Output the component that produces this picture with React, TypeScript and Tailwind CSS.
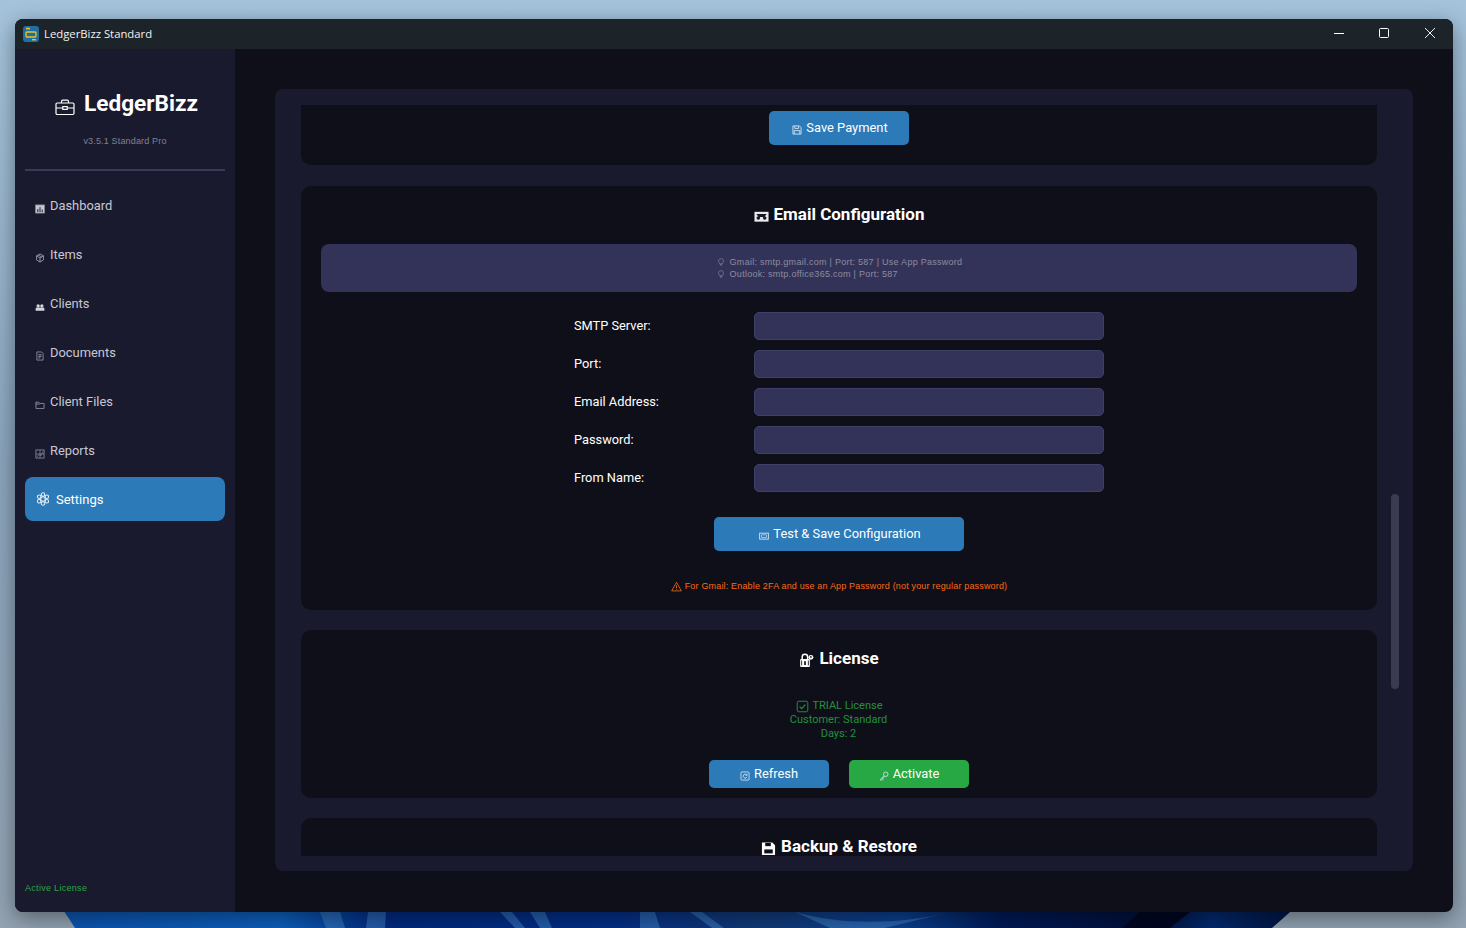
import React from "react";

const Ic = ({ className = "", children, vb = "0 0 16 16" }: { className?: string; children: React.ReactNode; vb?: string }) => (
  <svg viewBox={vb} className={className} fill="none" stroke="currentColor" strokeWidth={1.2}>
    {children}
  </svg>
);

const Icons: Record<string, React.ReactNode> = {
  dashboard: (<><rect x="1" y="1.5" width="14" height="13" fill="#c5c5cf" stroke="#8e8e9c" /><path d="M4.5 13V8M8 13V5M11.5 13V9" stroke="#1a1a2e" strokeWidth="1.6" /></>),
  items: (<><path d="M8 1.5l5.5 3v6.5L8 14.5 2.5 11V4.5z" /><path d="M2.5 4.5L8 8l5.5-3.5M8 8v6.5M5 3l5.5 3.3" /></>),
  clients: (<><circle cx="5" cy="6" r="2.6" fill="currentColor" stroke="none" /><circle cx="11" cy="6" r="2.6" fill="currentColor" stroke="none" /><path d="M1 14v-3.2q0-2 2-2h10q2 0 2 2V14z" fill="currentColor" stroke="none" /></>),
  doc: (<><path d="M3 1.5h7.5L13 4v10.5H3z" /><path d="M5.5 6h5M5.5 8.5h5M5.5 11h3" strokeWidth="1.4" /></>),
  folder: (<path d="M1.5 13.5v-10h4.5l1.5 2h7v8z M1.5 6.5h6" />),
  report: (<><rect x="1.5" y="1.5" width="13" height="13" /><path d="M1.5 8h13M8 1.5v13M3 12.5L7 9l2.5 1.5L13 4" strokeWidth="1" /></>),
  gear: (<><circle cx="8" cy="8" r="2.6" /><circle cx="8" cy="2.9" r="2" /><circle cx="8" cy="13.1" r="2" /><circle cx="3.6" cy="5.4" r="2" /><circle cx="12.4" cy="5.4" r="2" /><circle cx="3.6" cy="10.6" r="2" /><circle cx="12.4" cy="10.6" r="2" /></>),
  save: (<><path d="M1.5 1.5h10.5l2.5 2.5v10.5h-13z" strokeWidth="1.5" /><path d="M4.5 1.5v4h6v-4M3.5 14.5v-5.5h9v5.5" strokeWidth="1.5" /></>),
  saveSolid: (<><path d="M1 1.5h11l3 3V15H1z" fill="currentColor" stroke="none" /><path d="M4.5 2v3.5h6V2" fill="#0f0f1a" stroke="none" /><rect x="3.5" y="9" width="9" height="4.2" fill="#0f0f1a" stroke="none" /></>),
  mail: (<><rect x="0.5" y="3" width="15" height="10.5" fill="#e8e8ee" stroke="none" /><path d="M2.5 5.4H13.5L11 8.4H5z" fill="#16161f" stroke="none" /><circle cx="4.6" cy="9.6" r="1.9" fill="#16161f" stroke="none" /><circle cx="11.4" cy="9.6" r="1.9" fill="#16161f" stroke="none" /></>),
  mailOutline: (<><rect x="1" y="3.5" width="14" height="9.5" strokeWidth="1.5" /><rect x="4" y="6" width="8" height="4.5" rx="1" strokeWidth="1.2" /></>),
  bulb: (<><path d="M5 10.2C3.6 9 3 7.8 3 6.3a5 5 0 0 1 10 0c0 1.5-.6 2.7-2 3.9V11.5H5z" /><path d="M5.8 13.2h4.4M6.8 15h2.4" /></>),
  warn: (<><path d="M8 1.8L15 14.4H1z" /><path d="M8 6v4.6M8 11.8v1.2" /></>),
  check: (<><rect x="1.5" y="1.5" width="13" height="13" rx="2" /><path d="M4.5 8.2l2.5 2.5 4.5-5" strokeWidth="1.4" /></>),
  refresh: (<><rect x="1.5" y="1.5" width="13" height="13" rx="1.5" strokeWidth="1.4" /><path d="M11 6.5A3.2 3.2 0 1 0 11.2 9.5M11.2 4.5v2.4H8.8" strokeWidth="1.5" /></>),
  key: (<><circle cx="10.8" cy="5.2" r="3.6" strokeWidth="1.4" /><path d="M8 7.8L1.8 14l1.2 1 1.4-1.4 1.2 1 1.1-1.4-.8-1L9 9" strokeWidth="1.4" /></>),
  lock: (<><rect x="1.2" y="6.4" width="10.4" height="8.4" rx="1" fill="currentColor" stroke="none" /><path d="M3.4 6.5V4.2a2.9 2.9 0 0 1 5.8 0v2.3" strokeWidth="1.6" /><circle cx="12.7" cy="4.6" r="2.6" fill="currentColor" stroke="none" /><rect x="5.5" y="8.8" width="1.8" height="4" fill="#0f0f1a" stroke="none" /><path d="M2.8 8v5.2M10 8v5.2" stroke="#0f0f1a" strokeWidth=".9" /><circle cx="12.7" cy="4.2" r=".9" fill="#0f0f1a" stroke="none" /></>),
  case: (<><rect x="1" y="5" width="18" height="11.5" rx="1.2" /><path d="M6.5 5V3.4q0-1.2 1.2-1.2h4.6q1.2 0 1.2 1.2V5M1 10h6.5M12.5 10H19" /><rect x="7.8" y="8.6" width="4.4" height="2.8" /></>),
};

const navItems: [string, string, string][] = [
  ["Dashboard", "dashboard", "text-[#c5c5cf]"],
  ["Items", "items", "text-[#b4b4c0]"],
  ["Clients", "clients", "text-[#d5d5dd]"],
  ["Documents", "doc", "text-[#a4a4b2]"],
  ["Client Files", "folder", "text-[#a4a4b2]"],
  ["Reports", "report", "text-[#9a9aa8]"],
];

const fields = ["SMTP Server:", "Port:", "Email Address:", "Password:", "From Name:"];

const Card = ({ className = "", children }: { className?: string; children: React.ReactNode }) => (
  <section className={`shrink-0 bg-[#0f0f1a] rounded-[10px] ${className}`}>{children}</section>
);

const Heading = ({ icon, label, iconClass = "w-[15px] h-[15px]" }: { icon: string; label: string; iconClass?: string }) => (
  <h2 className="flex items-center justify-center gap-[5px] text-[17px] leading-5 font-bold text-white">
    <Ic className={`${iconClass} mt-[5px] shrink-0`}>{Icons[icon]}</Ic>
    <span>{label}</span>
  </h2>
);

const Button = ({ icon, label, className }: { icon: string; label: string; className: string }) => (
  <button className={`flex items-center justify-center gap-[4px] rounded-[5px] text-[12.9px] text-white ${className}`}>
    <Ic className="w-[10px] h-[10px] mt-[4px] shrink-0 text-[#cfe0ef]">{Icons[icon]}</Ic>
    <span className="-mt-[1px]">{label}</span>
  </button>
);

export default function App() {
  return (
    <div className="relative w-[1466px] h-[928px] overflow-hidden bg-[#94b2cc] font-['Roboto',sans-serif]">
      <svg className="absolute inset-0 w-full h-full" viewBox="0 0 1466 928" preserveAspectRatio="none">
        <defs>
          <linearGradient id="sky" x1="0" y1="0" x2="0" y2="1">
            <stop offset="0" stopColor="#a5c4dc" />
            <stop offset="0.5" stopColor="#8ba5bd" />
            <stop offset="1" stopColor="#93a3b3" />
          </linearGradient>
          <linearGradient id="bloom" x1="0" y1="0" x2="1" y2="0">
            <stop offset="0" stopColor="#0c55b0" />
            <stop offset="0.18" stopColor="#0d60bd" />
            <stop offset="0.26" stopColor="#012a80" />
            <stop offset="0.45" stopColor="#032f88" />
            <stop offset="0.56" stopColor="#123a78" />
            <stop offset="0.68" stopColor="#0a4090" />
            <stop offset="0.76" stopColor="#011a58" />
            <stop offset="0.88" stopColor="#00103a" />
            <stop offset="0.93" stopColor="#022a70" />
            <stop offset="1" stopColor="#02133f" />
          </linearGradient>
        </defs>
        <rect width="1466" height="928" fill="url(#sky)" />
        <path d="M60 905H1298L1272 928H75z" fill="url(#bloom)" />
        <path d="M320 912L326 928H345L340 912zM368 912L366 928H385L386 912zM500 912L515 928H525L512 912zM530 912L540 928H552L545 912zM640 912L640 928H660L655 912zM690 912L712 928H724L702 912zM795 912C840 925 900 925 950 912L885 928H830z" fill="#3a7cc4" opacity=".6" />
        <path d="M1140 912L1122 928H1170L1190 912z" fill="#010722" />
      </svg>

      <div className="absolute left-[15px] top-[19px] w-[1438px] h-[893px] flex flex-col rounded-[8px] overflow-hidden shadow-[0_6px_22px_rgba(0,0,0,0.42)] bg-[#0f0f1a]">
        <header className="h-[30px] shrink-0 flex items-center bg-[#1c2329] pl-[8px] font-['Open_Sans',sans-serif] text-[11.3px] text-[#f2f2f2]">
          <svg viewBox="0 0 16 16" className="w-4 h-4 shrink-0">
            <rect width="16" height="16" rx="3" fill="#1f6fa3" />
            <rect x="3" y="6" width="10" height="5" rx="1" fill="none" stroke="#f0c020" strokeWidth="1.3" />
            <rect x="3" y="1.8" width="4" height="1.6" fill="#f0c020" />
            <rect x="9" y="13" width="4" height="1.4" fill="#f0c020" />
          </svg>
          <span className="ml-[5px]">LedgerBizz Standard</span>
          <div className="ml-auto flex items-center text-white">
            <svg viewBox="0 0 46 30" className="w-[46px] h-[30px]"><path d="M19 14.5h10" stroke="#fff" strokeWidth="1" /></svg>
            <svg viewBox="0 0 46 30" className="w-[46px] h-[30px]"><rect x="18.5" y="9.5" width="9" height="9" rx="1" fill="none" stroke="#fff" strokeWidth="1" /></svg>
            <svg viewBox="0 0 46 30" className="w-[46px] h-[30px]"><path d="M18 9l10 10M28 9L18 19" stroke="#eee" strokeWidth="1" /></svg>
          </div>
        </header>

        <div className="flex-1 min-h-0 flex">
          <aside className="w-[220px] shrink-0 bg-[#1a1a2e] flex flex-col px-[10px]">
            <div className="h-[122px] shrink-0 flex flex-col items-center border-b-2 border-[#3a3a5c]">
              <div className="mt-[41px] ml-[3px] flex items-center gap-[9px] text-white">
                <Ic className="w-[20px] h-[20px] mt-[5px] shrink-0" vb="0 0 20 18">{Icons.case}</Ic>
                <span className="text-[22.6px] leading-7 font-bold">LedgerBizz</span>
              </div>
              <div className="mt-[17px] text-[9px] leading-3 tracking-[0.16px] text-[#80808e] font-['Liberation_Sans',sans-serif]">v3.5.1 Standard Pro</div>
            </div>
            <nav className="mt-[12px] flex flex-col gap-[5px]">
              {navItems.map(([label, icon, color]) => (
                <div key={label} className="h-[44px] flex items-center pl-[10px] text-[12.9px] text-[#c8c8d4]">
                  <Ic className={`w-[10px] h-[10px] mt-[8px] mr-[5px] shrink-0 ${color}`}>{Icons[icon]}</Ic>
                  <span className="pt-[2px]">{label}</span>
                </div>
              ))}
              <div className="h-[44px] flex items-center pl-[11px] rounded-[8px] bg-[#2d7ab8] text-[13px] text-white">
                <Ic className="w-[14px] h-[14px] mr-[6px] shrink-0 text-[#e4eef6]">{Icons.gear}</Ic>
                <span className="pt-[2px]">Settings</span>
              </div>
            </nav>
            <div className="mt-auto mb-[18px] text-[9px] leading-3 tracking-[0.3px] text-[#28a745] font-['Liberation_Sans',sans-serif]">Active License</div>
          </aside>

          <main className="flex-1 min-w-0 pl-[40px] pr-[40px] pt-[40px] pb-[41px]">
            <div className="relative h-full rounded-[8px] bg-[#1a1a2e] pl-[26px] pr-[36px] pt-[16px] pb-[15px]">
              <div className="h-full overflow-hidden flex flex-col gap-[21px]">
                <Card className="h-[60px] rounded-t-none flex justify-center pt-[6px]">
                  <Button icon="save" label="Save Payment" className="w-[140px] h-[34px] pl-[2px] bg-[#2d7ab8]" />
                </Card>

                <Card className="h-[424px] mt-0 px-[20px] pt-[18px] flex flex-col items-stretch">
                  <Heading icon="mail" label="Email Configuration" />
                  <div className="mt-[20px] h-[48px] rounded-[8px] bg-[#33335a] flex justify-center items-center text-[9px] leading-3 tracking-[0.27px] text-[#8c8c9c] font-['Liberation_Sans',sans-serif]">
                    <div className="ml-[1px] -mt-[1px]">
                      {["Gmail: smtp.gmail.com | Port: 587 | Use App Password", "Outlook: smtp.office365.com | Port: 587"].map((t) => (
                        <div key={t} className="flex items-center gap-[5px]">
                          <Ic className="w-[8px] h-[10px] shrink-0">{Icons.bulb}</Ic>
                          <span>{t}</span>
                        </div>
                      ))}
                    </div>
                  </div>
                  <div className="mt-[20px] mx-auto w-[530px] flex flex-col gap-[10px]">
                    {fields.map((f) => (
                      <div key={f} className="flex items-center h-[28px]">
                        <label className="w-[180px] text-[12.8px] text-white">{f}</label>
                        <div className="w-[350px] h-[28px] rounded-[5px] border border-[#3f3f68] bg-[#33335a]" />
                      </div>
                    ))}
                  </div>
                  <div className="mt-[25px] flex justify-center">
                    <Button icon="mailOutline" label="Test & Save Configuration" className="w-[250px] h-[34px] pl-[2px] bg-[#2d7ab8]" />
                  </div>
                  <div className="mt-[29px] flex items-center justify-center gap-[3px] text-[9px] leading-3 tracking-[0.17px] text-[#f96a10] font-['Liberation_Sans',sans-serif]">
                    <Ic className="w-[11px] h-[11px] shrink-0">{Icons.warn}</Ic>
                    <span>For Gmail: Enable 2FA and use an App Password (not your regular password)</span>
                  </div>
                </Card>

                <Card className="h-[168px] -mt-px pt-[18px] flex flex-col items-center">
                  <Heading icon="lock" label="License" />
                  <div className="mt-[31px] ml-[-1px] text-[11px] leading-[14px] text-[#23913c] text-center">
                    <div className="flex items-center justify-center gap-[3px] pl-[2px]">
                      <Ic className="w-[13px] h-[13px] shrink-0">{Icons.check}</Ic>
                      <span>TRIAL License</span>
                    </div>
                    <div>Customer: Standard</div>
                    <div>Days: 2</div>
                  </div>
                  <div className="mt-[19px] flex gap-[20px]">
                    <Button icon="refresh" label="Refresh" className="w-[120px] h-[28px] bg-[#2d7ab8]" />
                    <Button icon="key" label="Activate" className="w-[120px] h-[28px] bg-[#28a745]" />
                  </div>
                </Card>

                <Card className="h-[60px] -mt-px pt-[18px]">
                  <Heading icon="saveSolid" label="Backup & Restore" />
                </Card>
              </div>
              <div className="absolute right-[14px] top-[405px] w-[8px] h-[195px] rounded-[4px] bg-[#3a3a50]" />
            </div>
          </main>
        </div>
      </div>
    </div>
  );
}
